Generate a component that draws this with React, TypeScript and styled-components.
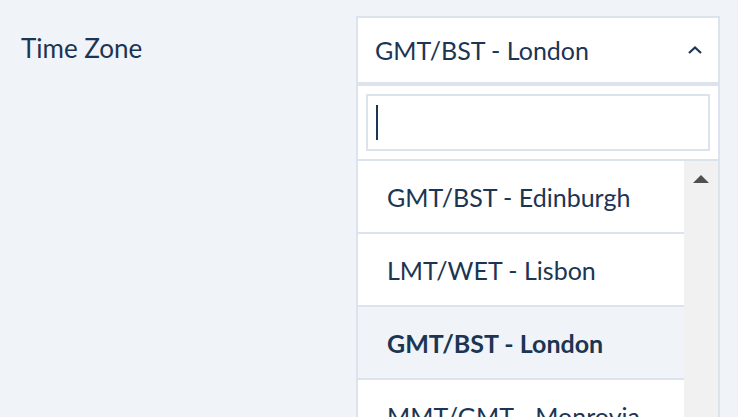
import React from "react";
import styled, {createGlobalStyle} from "styled-components";

const GlobalStyle = createGlobalStyle`
  html, body {
    margin: 0;
    padding: 0;
    height: 417px;
    overflow: hidden;
    background: #f0f3f8;
    font-family: Lato, "Open Sans", sans-serif;
    color: #1b3553;
  }
`;

const Page = styled.div`
  display: flex;
  align-items: flex-start;
  padding: 16px 0 0 21px;
`;

const Label = styled.div`
  width: 335px;
  font-size: 26px;
  line-height: 30px;
  margin-top: 17px;
`;

const Select = styled.div`
  width: 360px;
  border: 2px solid #dde3ec;
  background: #fff;
`;

const Header = styled.div`
  height: 64px;
  display: flex;
  align-items: center;
  justify-content: space-between;
  padding: 0 16px 0 17px;
  border-bottom: 2px solid #dde3ec;
  font-size: 25px;
`;

const Dropdown = styled.div`
  border-top: 2px solid #dde3ec;
`;

const SearchArea = styled.div`
  padding: 8px;
  border-bottom: 2px solid #dde3ec;
`;

const SearchBox = styled.div`
  height: 53px;
  border: 2px solid #dde3ec;
  display: flex;
  align-items: center;
  padding-left: 8px;
`;

const Caret = styled.span`
  width: 2px;
  height: 35px;
  background: #1b3553;
`;

const ListWrap = styled.div`
  display: flex;
`;

const List = styled.div`
  flex: 1;
`;

const Item = styled.div<{ $active?: boolean }>`
  height: 71px;
  display: flex;
  align-items: center;
  padding-left: 29px;
  border-bottom: 2px solid #dde3ec;
  font-size: 25px;
  font-weight: ${p => (p.$active ? 700 : 400)};
  background: ${p => (p.$active ? "#f0f3f8" : "#fff")};
  white-space: nowrap;
`;

const Scrollbar = styled.div`
  width: 34px;
  background: #f1f1f1;
  display: flex;
  justify-content: center;
  padding-top: 14px;
`;

const UpArrow = styled.div`
  width: 0;
  height: 0;
  border-left: 8px solid transparent;
  border-right: 8px solid transparent;
  border-bottom: 8px solid #505050;
`;

const zones = [
    "GMT/BST - Edinburgh",
    "LMT/WET - Lisbon",
    "GMT/BST - London",
    "MMT/GMT - Monrovia",
];

const App = () => {
    const selected = "GMT/BST - London";
    return (
        <>
            <GlobalStyle/>
            <Page>
                <Label>Time Zone</Label>
                <Select>
                    <Header>
                        <span>{selected}</span>
                        <svg width="14" height="8" viewBox="0 0 14 8">
                            <polyline points="1,7 7,1.5 13,7" fill="none" stroke="#1b3553" strokeWidth="2.2"/>
                        </svg>
                    </Header>
                    <Dropdown>
                        <SearchArea>
                            <SearchBox>
                                <Caret/>
                            </SearchBox>
                        </SearchArea>
                        <ListWrap>
                            <List>
                                {zones.map(z => (
                                    <Item key={z} $active={z === selected}>{z}</Item>
                                ))}
                            </List>
                            <Scrollbar>
                                <UpArrow/>
                            </Scrollbar>
                        </ListWrap>
                    </Dropdown>
                </Select>
            </Page>
        </>
    );
};

export default App;
